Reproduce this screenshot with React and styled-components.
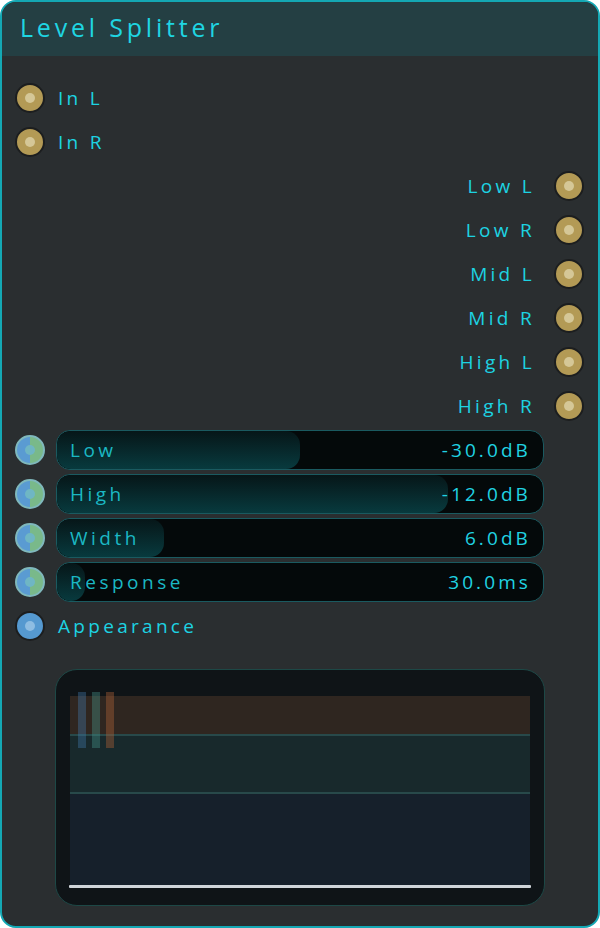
import React from "react";
import styled, { createGlobalStyle } from "styled-components";

const GlobalStyle = createGlobalStyle`
  html, body {
    margin: 0;
    padding: 0;
    background: #ffffff;
  }
  * {
    box-sizing: border-box;
  }
`;

const inputs = ["In L", "In R"];
const outputs = ["Low L", "Low R", "Mid L", "Mid R", "High L", "High R"];
const params = [
  { name: "Low", value: "-30.0dB", fill: 50 },
  { name: "High", value: "-12.0dB", fill: 80.5 },
  { name: "Width", value: "6.0dB", fill: 22 },
  { name: "Response", value: "30.0ms", fill: 5.8 },
];

function App() {
  return (
    <>
      <GlobalStyle />
      <Panel>
        <Header>
          <Title>Level Splitter</Title>
        </Header>
        <Body>
          {inputs.map((name) => (
            <Row key={name}>
              <Socket kind='audio' />
              <Label>{name}</Label>
            </Row>
          ))}
          {outputs.map((name) => (
            <Row key={name} $right>
              <Label>{name}</Label>
              <Socket kind='audio' />
            </Row>
          ))}
          {params.map((p) => (
            <Row key={p.name}>
              <Socket kind='param' />
              <Slider>
                <SliderFill style={{ width: `${p.fill}%` }} />
                <SliderLabel>{p.name}</SliderLabel>
                <SliderValue>{p.value}</SliderValue>
              </Slider>
            </Row>
          ))}
          <Row>
            <Socket kind='style' />
            <Label>Appearance</Label>
          </Row>
          <Preview>
            <Chart>
              <Band $color='#2f2620' $height={38} />
              <Divider />
              <Band $color='#18292c' $height={56} />
              <Divider />
              <Band $color='#16202b' $grow />
              <Baseline />
              <Marker $left={8} $color='rgba(66, 120, 170, 0.38)' />
              <Marker $left={22} $color='rgba(70, 150, 140, 0.38)' />
              <Marker $left={36} $color='rgba(170, 95, 55, 0.42)' />
            </Chart>
          </Preview>
        </Body>
      </Panel>
    </>
  );
}

const font = `"Open Sans", "DejaVu Sans", sans-serif`;

const Panel = styled.div`
  width: 600px;
  height: 928px;
  border: 2px solid #14a8b4;
  border-radius: 16px;
  background: #2a2e30;
  overflow: hidden;
  font-family: ${font};
  display: flex;
  flex-direction: column;
`;

const Header = styled.div`
  height: 54px;
  background: #243f43;
  display: flex;
  align-items: center;
  padding-left: 18px;
  padding-bottom: 5px;
`;

const Title = styled.h1`
  margin: 0;
  font-size: 25px;
  font-weight: 400;
  letter-spacing: 3.8px;
  color: #1fd5e2;
`;

const Body = styled.div`
  padding: 20px 14px 0 13px;
  display: flex;
  flex-direction: column;
`;

const Row = styled.div`
  height: 44px;
  display: flex;
  align-items: center;
  justify-content: ${({ $right }) => ($right ? "flex-end" : "flex-start")};
  gap: ${({ $right }) => ($right ? "19px" : "11px")};
`;

const socketStyles = {
  audio: {
    bg: "#b39a55",
    border: "#1c1e1f",
    dot: "#d5c797",
  },
  param: {
    bg: "linear-gradient(to right, #5a9bd2 50%, #79b98a 50%)",
    border: "#7fb8bc",
    dot: "#6fb6c4",
  },
  style: {
    bg: "#5599d0",
    border: "#1c1e1f",
    dot: "#8ebde2",
  },
};

const Socket = styled.div`
  flex: none;
  width: 30px;
  height: 30px;
  border-radius: 50%;
  background: ${({ kind }) => socketStyles[kind].bg};
  border: 2px solid ${({ kind }) => socketStyles[kind].border};
  display: flex;
  align-items: center;
  justify-content: center;

  &::after {
    content: "";
    width: 10px;
    height: 10px;
    border-radius: 50%;
    background: ${({ kind }) => socketStyles[kind].dot};
  }
`;

const Label = styled.span`
  font-size: 19px;
  letter-spacing: 3.3px;
  color: #1dd3e2;
  padding-left: 2px;
`;

const Slider = styled.div`
  position: relative;
  width: 488px;
  height: 40px;
  border-radius: 14px;
  background: #04090a;
  border: 1px solid #1a5a60;
  overflow: hidden;
  display: flex;
  align-items: center;
  justify-content: space-between;
  padding: 0 12px 0 13px;
`;

const SliderFill = styled.div`
  position: absolute;
  left: 0;
  top: 0;
  bottom: 0;
  border-radius: 14px;
  background: linear-gradient(to bottom, #061618, #083a3e);
`;

const SliderLabel = styled.span`
  position: relative;
  font-size: 19px;
  letter-spacing: 3.5px;
  color: #1bb8c4;
`;

const SliderValue = styled.span`
  position: relative;
  font-size: 19px;
  letter-spacing: 3.1px;
  color: #20d3e2;
`;

const Preview = styled.div`
  margin: 21px 0 0 40px;
  width: 490px;
  height: 237px;
  border-radius: 22px;
  border: 1px solid #1d4846;
  background: #0f1417;
  padding: 26px 14px 17px 14px;
  display: flex;
`;

const Chart = styled.div`
  position: relative;
  flex: 1;
  display: flex;
  flex-direction: column;
`;

const Band = styled.div`
  background: ${({ $color }) => $color};
  height: ${({ $height }) => ($height ? `${$height}px` : "auto")};
  flex: ${({ $grow }) => ($grow ? 1 : "none")};
`;

const Divider = styled.div`
  height: 2px;
  background: #28494a;
`;

const Baseline = styled.div`
  height: 3px;
  margin: 0 -1px;
  border-radius: 1px;
  background: #d0d5da;
`;

const Marker = styled.div`
  position: absolute;
  top: -4px;
  left: ${({ $left }) => $left}px;
  width: 8px;
  height: 56px;
  background: ${({ $color }) => $color};
`;

export default App;
